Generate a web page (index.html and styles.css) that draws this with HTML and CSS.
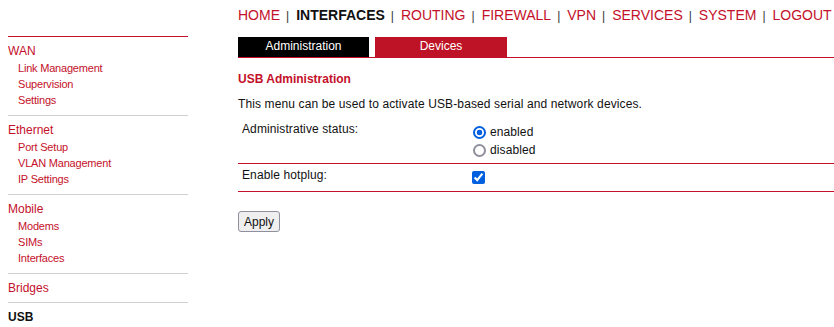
FILE: index.html
```html
<!DOCTYPE html>
<html lang="en">
<head>
<meta charset="utf-8">
<title>USB Administration</title>
<link rel="stylesheet" href="styles.css">
</head>
<body>
<div class="page">
  <aside class="sidebar">
    <div class="section first">
      <div class="sec-title">WAN</div>
      <ul class="sec-items">
        <li>Link Management</li>
        <li>Supervision</li>
        <li>Settings</li>
      </ul>
    </div>
    <div class="section">
      <div class="sec-title">Ethernet</div>
      <ul class="sec-items">
        <li>Port Setup</li>
        <li>VLAN Management</li>
        <li>IP Settings</li>
      </ul>
    </div>
    <div class="section">
      <div class="sec-title">Mobile</div>
      <ul class="sec-items">
        <li>Modems</li>
        <li>SIMs</li>
        <li>Interfaces</li>
      </ul>
    </div>
    <div class="section">
      <div class="sec-title">Bridges</div>
    </div>
    <div class="section">
      <div class="sec-title current">USB</div>
    </div>
  </aside>
  <main class="main">
    <nav class="topnav">
      <span class="nav-item">HOME</span><span class="sep">|</span><span class="nav-item active">INTERFACES</span><span class="sep">|</span><span class="nav-item">ROUTING</span><span class="sep">|</span><span class="nav-item">FIREWALL</span><span class="sep">|</span><span class="nav-item">VPN</span><span class="sep">|</span><span class="nav-item">SERVICES</span><span class="sep">|</span><span class="nav-item">SYSTEM</span><span class="sep">|</span><span class="nav-item">LOGOUT</span>
    </nav>
    <div class="tabs">
      <div class="tab tab-active">Administration</div>
      <div class="tab tab-other">Devices</div>
    </div>
    <h2 class="heading">USB Administration</h2>
    <p class="desc">This menu can be used to activate USB-based serial and network devices.</p>
    <div class="form-table">
      <div class="row">
        <div class="label">Administrative status:</div>
        <div class="value options">
          <label class="opt"><input class="radio" type="radio" name="status" checked><span>enabled</span></label>
          <label class="opt"><input class="radio" type="radio" name="status"><span>disabled</span></label>
        </div>
      </div>
      <div class="row">
        <div class="label">Enable hotplug:</div>
        <div class="value"><input class="check" type="checkbox" checked></div>
      </div>
    </div>
    <button class="apply" type="button">Apply</button>
  </main>
</div>
</body>
</html>
```

FILE: styles.css
```css
html, body {
  background: #fff;
}
body {
  margin: 8px 0 0 8px;
  font-family: "Liberation Sans", Arial, sans-serif;
  color: #111;
}
.page {
  display: flex;
  gap: 50px;
}
.sidebar {
  width: 180px;
  flex: none;
  padding-top: 28px;
}
.section {
  border-top: 1px solid #d0d0d0;
  padding: 5px 0 5px 0;
}
.section.first {
  border-top-color: #c4102a;
}
.sec-title {
  font-size: 12px;
  line-height: 18px;
  color: #c4102a;
}
.sec-title.current {
  color: #111;
  font-weight: bold;
}
.sec-items {
  list-style: none;
  margin: 0 0 2px 0;
  padding: 0 0 0 10px;
}
.sec-items li {
  font-size: 11px;
  line-height: 16px;
  letter-spacing: -0.2px;
  color: #c4102a;
}
.main {
  flex: 1;
  min-width: 0;
}
.topnav {
  font-size: 14px;
  line-height: 14px;
  white-space: nowrap;
  color: #c4102a;
}
.nav-item.active {
  color: #111;
  font-weight: bold;
}
.sep {
  color: #333;
  font-size: 12px;
  padding: 0 7px 0 6px;
}
.tabs {
  display: flex;
  gap: 6px;
  margin-top: 14px;
  border-bottom: 1px solid #c4102a;
}
.tab {
  width: 131px;
  height: 20px;
  line-height: 19px;
  font-size: 12px;
  color: #fff;
  text-align: center;
}
.tab-active {
  background: #000;
}
.tab-other {
  background: #be1326;
  width: 132px;
}
.heading {
  margin: 14px 0 0 0;
  font-size: 12px;
  line-height: 14px;
  font-weight: bold;
  color: #c4102a;
}
.desc {
  margin: 11px 0 0 0;
  font-size: 12px;
  line-height: 14px;
  letter-spacing: 0.12px;
  color: #111;
}
.form-table {
  margin-top: 7px;
}
.row {
  display: flex;
  border-bottom: 1px solid #c4102a;
}
.label {
  width: 222px;
  padding: 4px;
  font-size: 12px;
  line-height: 14px;
  letter-spacing: 0.1px;
}
.value {
  padding: 4px 4px 4px 0;
}
.options {
  padding-top: 5px;
}
.opt {
  display: flex;
  align-items: center;
  height: 18px;
  font-size: 12px;
  letter-spacing: 0.1px;
}
.radio {
  appearance: none;
  -webkit-appearance: none;
  box-sizing: border-box;
  margin: 0 4px 0 5px;
  width: 13px;
  height: 13px;
  border-radius: 50%;
  border: 2px solid #8f8f9d;
  background: #fff;
}
.radio:checked {
  border-color: #0060df;
  background: radial-gradient(circle, #0060df 0 2.6px, #fff 3.1px);
}
.check {
  display: block;
  margin: 3px 3px 3px 4px;
  width: 13px;
  height: 13px;
  accent-color: #0060df;
}
.apply {
  margin-top: 19px;
  height: 21px;
  padding: 0 5px;
  font-family: "Liberation Sans", Arial, sans-serif;
  font-size: 12px;
  color: #111;
  background: #efefef;
  border: 1px solid #8f8f9d;
  border-radius: 3px;
}
```
